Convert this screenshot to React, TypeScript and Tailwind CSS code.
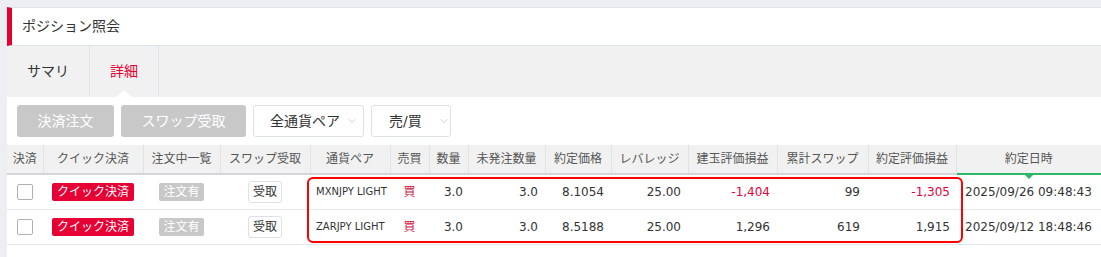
import { ChevronDown } from "lucide-react";

type Position = {
  pair: string;
  side: string;
  qty: string;
  openQty: string;
  price: string;
  leverage: string;
  pl: string;
  swap: string;
  total: string;
  date: string;
};

const positions: Position[] = [
  {
    pair: "MXNJPY LIGHT",
    side: "買",
    qty: "3.0",
    openQty: "3.0",
    price: "8.1054",
    leverage: "25.00",
    pl: "-1,404",
    swap: "99",
    total: "-1,305",
    date: "2025/09/26 09:48:43",
  },
  {
    pair: "ZARJPY LIGHT",
    side: "買",
    qty: "3.0",
    openQty: "3.0",
    price: "8.5188",
    leverage: "25.00",
    pl: "1,296",
    swap: "619",
    total: "1,915",
    date: "2025/09/12 18:48:46",
  },
];

const columns = [
  { label: "決済", width: "w-[36px]" },
  { label: "クイック決済", width: "w-[100px]" },
  { label: "注文中一覧", width: "w-[77px]" },
  { label: "スワップ受取", width: "w-[90px]" },
  { label: "通貨ペア", width: "w-[80px]" },
  { label: "売買", width: "w-[39px]" },
  { label: "数量", width: "w-[39px]" },
  { label: "未発注数量", width: "w-[77px]" },
  { label: "約定価格", width: "w-[66px]" },
  { label: "レバレッジ", width: "w-[77px]" },
  { label: "建玉評価損益", width: "w-[89px]" },
  { label: "累計スワップ", width: "w-[91px]" },
  { label: "約定評価損益", width: "w-[88px]" },
  { label: "約定日時", width: "w-[145px]" },
];

const isNegative = (v: string) => v.startsWith("-");

export default function App() {
  return (
    <div className="h-[257px] w-[1101px] overflow-hidden bg-[#eceef1] pl-[7px] pt-[7px] font-['DejaVu_Sans','Noto_Sans_CJK_JP',sans-serif] text-[#333]">
      <div className="flex h-[39px] items-center border-t border-b border-[#dde3ea] border-l-[5px] border-l-[#e60033] bg-white pl-[10px] text-[14px]">
        ポジション照会
      </div>

      <div className="flex h-[51px] bg-[#f1f1f1]">
        <div className="flex w-[83px] items-center justify-center border-r border-[#dde3ea] text-[14px]">
          サマリ
        </div>
        <div className="relative flex w-[69px] items-center justify-center border-r border-[#dde3ea] text-[14px] text-[#e60033]">
          詳細
          <span className="absolute bottom-0 left-1/2 h-0 w-0 -translate-x-1/2 border-x-[8px] border-b-[7px] border-x-transparent border-b-white" />
        </div>
      </div>

      <div className="h-[200px] bg-white">
        <div className="flex items-center gap-[7px] pl-[10px] pt-[8px]">
          <button className="h-[32px] w-[97px] rounded-[3px] bg-[#c8c8c8] text-[14px] text-white">
            決済注文
          </button>
          <button className="h-[32px] w-[125px] rounded-[3px] bg-[#c8c8c8] text-[14px] text-white">
            スワップ受取
          </button>
          <div className="flex h-[32px] w-[111px] items-center gap-[6px] rounded-[3px] border border-[#dde1e6] pl-[16px] text-[14px]">
            全通貨ペア
            <ChevronDown size={12} strokeWidth={1.5} className="text-[#bbb]" />
          </div>
          <div className="flex h-[32px] w-[80px] items-center gap-[16px] rounded-[3px] border border-[#dde1e6] pl-[17px] text-[14px]">
            売/買
            <ChevronDown size={12} strokeWidth={1.5} className="text-[#bbb]" />
          </div>
        </div>

        <div className="relative mt-[8px]">
          <table className="table-fixed border-collapse">
            <colgroup>
              {columns.map((c) => (
                <col key={c.label} className={c.width} />
              ))}
            </colgroup>
            <thead>
              <tr className="h-[29px] bg-[#f1f1f1] text-[12px] text-[#555]">
                {columns.map((c, i) => (
                  <th
                    key={c.label}
                    className={`border-b-2 p-0 font-normal ${
                      i === columns.length - 1
                        ? "relative border-b-[#2eb66b]"
                        : "border-r border-r-[#e0e4e8] border-b-[#d2d5d9]"
                    }`}
                  >
                    {c.label}
                    {i === columns.length - 1 && (
                      <span className="absolute -bottom-[6px] left-1/2 h-0 w-0 -translate-x-1/2 border-x-[4px] border-t-[4px] border-x-transparent border-t-[#2eb66b]" />
                    )}
                  </th>
                ))}
              </tr>
            </thead>
            <tbody>
              {positions.map((p) => (
                <tr key={p.pair} className="h-[35px] border-b border-[#e3e7ec] text-[12px]">
                  <td className="p-0">
                    <div className="ml-[10px] h-[16px] w-[16px] rounded-[2px] border border-[#b0b0b0]" />
                  </td>
                  <td className="p-0 pl-[9px]">
                    <span className="inline-flex h-[18px] w-[82px] items-center justify-center rounded-[2px] bg-[#e60033] text-[12px] text-white">
                      クイック決済
                    </span>
                  </td>
                  <td className="p-0 pl-[16px]">
                    <span className="inline-flex h-[18px] w-[45px] items-center justify-center rounded-[2px] bg-[#c8c8c8] text-[12px] text-white">
                      注文有
                    </span>
                  </td>
                  <td className="p-0 pl-[28px]">
                    <span className="inline-flex h-[22px] w-[34px] items-center justify-center rounded-[3px] border border-[#dde1e6] text-[12px]">
                      受取
                    </span>
                  </td>
                  <td className="p-0 pl-[6px] text-[10px]">{p.pair}</td>
                  <td className="p-0 text-center text-[#d0103a]">{p.side}</td>
                  <td className="p-0 pr-[5px] text-right">{p.qty}</td>
                  <td className="p-0 pr-[7px] text-right">{p.openQty}</td>
                  <td className="p-0 pr-[7px] text-right">{p.price}</td>
                  <td className="p-0 pr-[7px] text-right">{p.leverage}</td>
                  <td className={`p-0 pr-[7px] text-right ${isNegative(p.pl) ? "text-[#e60039]" : ""}`}>
                    {p.pl}
                  </td>
                  <td className="p-0 pr-[8px] text-right">{p.swap}</td>
                  <td className={`p-0 pr-[6px] text-right ${isNegative(p.total) ? "text-[#e60039]" : ""}`}>
                    {p.total}
                  </td>
                  <td className="p-0 pl-[9px] whitespace-nowrap">{p.date}</td>
                </tr>
              ))}
            </tbody>
          </table>
          <div className="pointer-events-none absolute left-[300px] top-[32px] h-[66px] w-[656px] rounded-[6px] border-2 border-[#f00]" />
        </div>
      </div>
    </div>
  );
}
